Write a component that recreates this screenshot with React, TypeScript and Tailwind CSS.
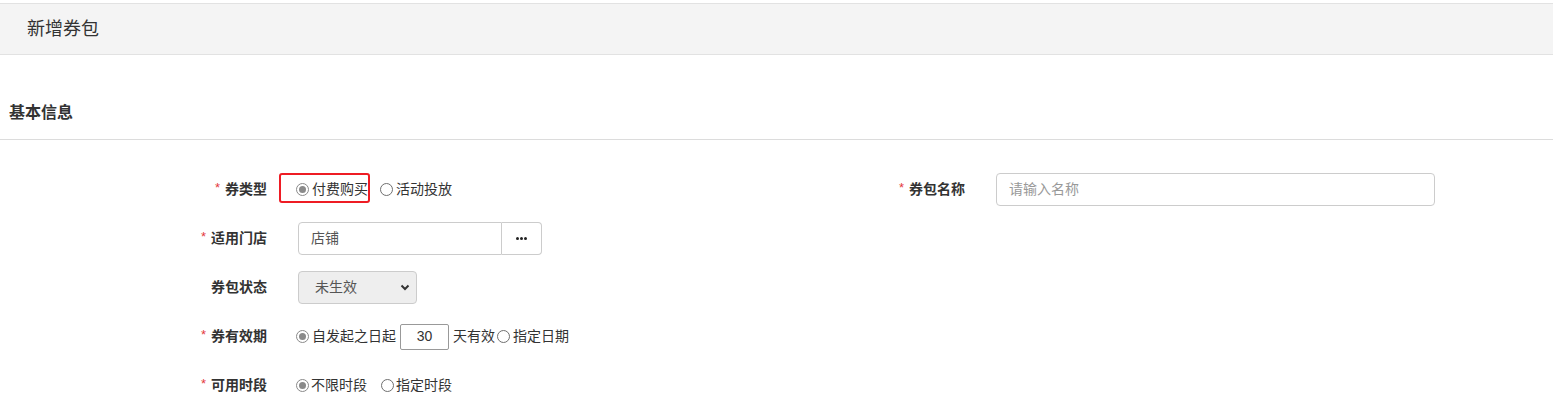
import React from "react";

const Radio = ({ checked, className = "" }: { checked?: boolean; className?: string }) =>
  checked ? (
    <span className={`inline-flex w-[13px] h-[13px] shrink-0 rounded-full border border-[#8a8a8a] bg-white items-center justify-center ${className}`}>
      <span className="block w-[7px] h-[7px] rounded-full bg-[#8a8a8a]" />
    </span>
  ) : (
    <span className={`inline-block w-[13px] h-[13px] shrink-0 rounded-full border border-[#6f6f6f] bg-white ${className}`} />
  );

const Label = ({ text, req, w = "w-[283px]", pr = "pr-[16px]" }: { text: string; req?: boolean; w?: string; pr?: string }) => (
  <div className={`${w} ${pr} shrink-0 flex justify-end items-center text-[14px] font-bold text-[#333]`}>
    {req && <span className="text-[#e4393c] font-normal text-[13px] mr-[5px] -translate-y-[2px]">*</span>}
    <span>{text}</span>
  </div>
);

export default function App() {
  return (
    <div className="w-[1553px] min-h-[419px] bg-white text-[#333] [font-family:'Liberation_Sans','Noto_Sans_CJK_SC',sans-serif]">
      <div className="mt-[3px] h-[52px] border-y border-[#e2e2e2] bg-[#f4f4f4] flex items-center pl-[27px] text-[18px] text-[#333]">
        新增券包
      </div>
      <div className="pt-[46px] pb-[14px] pl-[9px] leading-[24px] text-[16px] font-bold text-[#333] border-b border-[#dcdcdc]">
        基本信息
      </div>
      <div className="pt-[33px] flex flex-col gap-[16px] text-[14px]">
        {/* row 1 */}
        <div className="flex h-[33px]">
          <div className="w-[777px] shrink-0 flex">
            <Label text="券类型" req />
            <div className="relative flex items-center pl-[13px]">
              <div className="absolute left-[-4px] top-0 w-[91px] h-[30px] border-2 border-[#ee1c24] rounded-[3px]" />
              <Radio checked />
              <span className="ml-[3px]">付费购买</span>
              <Radio className="ml-[12px]" />
              <span className="ml-[3px]">活动投放</span>
            </div>
          </div>
          <div className="flex">
            <Label text="券包名称" req w="w-[203px]" pr="pr-[15px]" />
            <div className="ml-[16px] w-[439px] h-[33px] border border-[#cccccc] rounded-[4px] flex items-center pl-[12px] text-[#999]">
              请输入名称
            </div>
          </div>
        </div>
        {/* row 2 */}
        <div className="flex h-[33px]">
          <Label text="适用门店" req />
          <div className="flex pl-[15px]">
            <div className="w-[204px] h-[33px] border border-[#cccccc] rounded-l-[4px] flex items-center pl-[12px] text-[#555]">
              店铺
            </div>
            <div className="w-[40px] h-[33px] border border-l-0 border-[#cccccc] rounded-r-[4px] flex items-center justify-center gap-[1px]">
              <span className="w-[3px] h-[3px] rounded-full bg-[#222]" />
              <span className="w-[3px] h-[3px] rounded-full bg-[#222]" />
              <span className="w-[3px] h-[3px] rounded-full bg-[#222]" />
            </div>
          </div>
        </div>
        {/* row 3 */}
        <div className="flex h-[33px]">
          <Label text="券包状态" />
          <div className="flex pl-[15px]">
            <div className="w-[119px] h-[33px] border border-[#cccccc] bg-[#eeeeee] rounded-[4px] flex items-center justify-between pl-[16px] pr-[6px] text-[#555]">
              <span>未生效</span>
              <svg width="10" height="7" viewBox="0 0 10 7">
                <path d="M1.5 1.5 L5 5 L8.5 1.5" fill="none" stroke="#333" strokeWidth="2" />
              </svg>
            </div>
          </div>
        </div>
        {/* row 4 */}
        <div className="flex h-[33px]">
          <Label text="券有效期" req />
          <div className="flex items-center pl-[13px]">
            <Radio checked />
            <span className="ml-[3px]">自发起之日起</span>
            <div className="ml-[4px] w-[49px] h-[26px] border border-[#999] rounded-[2px] flex items-center justify-center text-[#333]">
              30
            </div>
            <span className="ml-[4px]">天有效</span>
            <Radio className="ml-[2px]" />
            <span className="ml-[3px]">指定日期</span>
          </div>
        </div>
        {/* row 5 */}
        <div className="flex h-[33px]">
          <Label text="可用时段" req />
          <div className="flex items-center pl-[13px]">
            <Radio checked />
            <span className="ml-[2px]">不限时段</span>
            <Radio className="ml-[14px]" />
            <span className="ml-[2px]">指定时段</span>
          </div>
        </div>
      </div>
    </div>
  );
}
